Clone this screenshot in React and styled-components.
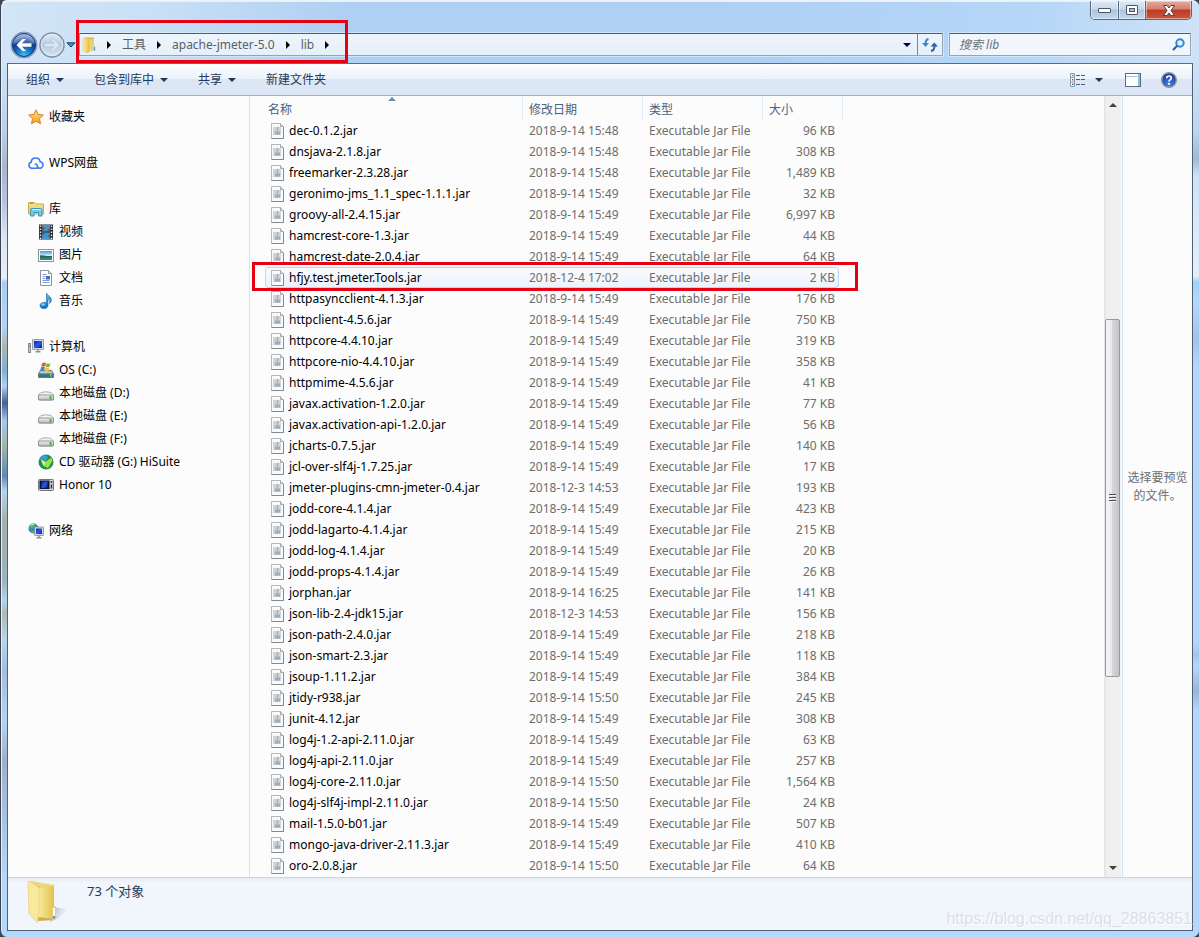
import React from "react";
import styled, { createGlobalStyle, css } from "styled-components";

const Global = createGlobalStyle`
  * { box-sizing: border-box; }
  body { margin: 0; background: #3d444e; }
  body, button, input {
    font-family: "Noto Sans", "Noto Sans CJK SC", sans-serif;
    font-size: 12px;
    line-height: 18px;
  }
  button { margin: 0; padding: 0; border: 0; background: none; color: inherit; cursor: default; }
  svg { display: block; flex: none; }
`;

const Window = styled.div`
  position: relative;
  display: flex;
  flex-direction: column;
  min-height: 100vh;
  padding: 0 7px 6px;
  border: 1px solid #39424e;
  border-top-color: #eef4fa;
  border-right: 0;
  border-bottom: 0;
  border-radius: 7px;
  box-shadow: inset 1px 1px 0 #e2f1fd;
  background:
    linear-gradient(100deg, #d3e5f7 0, #c9e0f6 150px, #afd0f2 340px, #aed0f3 60%, #b5d6f7 85%, #cfe3f7 100%) 0 0 / 100% 64px no-repeat,
    linear-gradient(#cfe4f8 60px, #bcd0e6 130px, #a9b7cc 165px, #b4c4dc 200px, #d9e4f3 235px, #e9eff8 277px, #a9ccf2 281px, #b2d3f5 325px, #a9b9ae 345px, #7fb0d4 370px, #b0d0f2 385px, #4a5c96 402px, #a9c8ea 420px, #a3b5a9 445px, #5f8ab4 475px, #b5d3f2 490px, #a3b1a8 520px, #9db4bd 580px, #b7d3ee 600px, #a9bcae 612px, #b9d4ee 640px, #a5bcdd 670px, #b7d3f2 720px, #9fb0cc 760px, #a9c3e2 820px, #b5d7fb 880px) 0 0 / 8px 100% no-repeat,
    linear-gradient(#cfe3f7 60px, #bcd6f0 130px, #9fb9d6 158px, #cfe3f7 175px, #e3f0fb 275px, #9fd2fb 281px, #b5d9fd 300px, #9fc4ea 340px, #b5d7fb 365px, #b5d7fb 640px, #a3c6ec 655px, #b5d7fb 665px, #98b6d8 690px, #b5d7fb 710px, #b5d7fb) 100% 0 / 7px 100% no-repeat,
    #b5d7fb;
`;

const CaptionButtons = styled.div`
  display: flex;
  align-self: flex-end;
  height: 19px;
  border: 1px solid #56697f;
  border-top: 0;
  border-radius: 0 0 5px 5px;
  overflow: hidden;
`;

const CaptionButton = styled.button`
  display: flex;
  align-items: center;
  justify-content: center;
  width: ${(p) => (p.$close ? 46 : 27)}px;
  border-left: ${(p) => (p.$first ? 0 : "1px solid #56697f")};
  box-shadow: inset 0 0 0 1px rgba(255, 255, 255, 0.45);
  background: ${(p) =>
    p.$close
      ? "linear-gradient(#e5aa9c 0, #d5806f 45%, #bd3a22 50%, #c9573c 100%)"
      : "linear-gradient(#dce9f7 0, #c8daee 45%, #adc4de 50%, #c3d8ef 100%)"};
`;

const NavBar = styled.div`
  display: flex;
  align-items: center;
  height: 43px;
  padding: 6px 1px 0 2px;
`;

const NavButtons = styled.div`
  display: flex;
  align-items: center;
  width: 69px;
`;

const NavButton = styled.button`
  display: flex;
`;

const fieldLook = css`
  height: 23px;
  border: 1px solid #93a4b8;
  border-top-color: #545c6a;
  border-radius: 1px;
  background: linear-gradient(#edf4fc, #e6f0fa);
  box-shadow: 0 0 0 1px rgba(225, 240, 253, 0.6);
`;

const AddressBar = styled.div`
  ${fieldLook}
  display: flex;
  flex: 1;
`;

const Crumbs = styled.nav`
  position: relative;
  display: flex;
  align-items: center;
  padding-left: 2px;
`;

const Crumb = styled.a`
  color: #5a6066;
  text-decoration: none;
`;

const CrumbArrow = styled.span`
  display: flex;
  justify-content: center;
  width: 26px;
`;

const AddressTools = styled.div`
  display: flex;
  margin-left: auto;
`;

const AddressButton = styled.button`
  display: flex;
  align-items: center;
  justify-content: center;
  width: ${(p) => (p.$divided ? 25 : 20)}px;
  border-left: ${(p) => (p.$divided ? "1px solid #76879a" : 0)};
`;

const SearchBox = styled.label`
  ${fieldLook}
  display: flex;
  align-items: center;
  width: 242px;
  margin-left: 6px;
  padding: 0 5px 0 9px;
  background: #f1f6fc;
`;

const SearchInput = styled.input`
  flex: 1;
  min-width: 0;
  padding: 0;
  border: 0;
  outline: 0;
  background: none;
  &::placeholder { color: #6b7077; font-style: italic; opacity: 1; }
`;

const Annotation = styled.span`
  position: absolute;
  inset: ${(p) => p.$inset};
  z-index: 2;
  border: 3px solid #e60012;
  pointer-events: none;
`;

const Client = styled.div`
  display: flex;
  flex: 1;
  flex-direction: column;
  border: 1px solid #4f6175;
  border-top-color: #5c6b7d;
  margin: 0 -1px 0 -1px;
  background: #fcfcfc;
`;

const Toolbar = styled.div`
  display: flex;
  align-items: center;
  height: 32px;
  padding: 0 15px 0 18px;
  border-bottom: 1px solid #9fb0c9;
  background: linear-gradient(#fefeff 0, #eaf3fb 48%, #dce6f4 50%, #dce7f5 100%);
  color: #1e395b;
`;

const ToolbarButton = styled.button`
  display: flex;
  align-items: center;
  gap: 6px;
  margin-right: 30px;
`;

const ViewTools = styled.div`
  display: flex;
  align-items: center;
  margin-left: auto;
`;

const IconButton = styled.button`
  display: flex;
  margin-left: ${(p) => p.$gap || 0}px;
`;

const Body = styled.div`
  display: flex;
  flex: 1;
`;

const Sidebar = styled.aside`
  display: flex;
  flex-direction: column;
  gap: 23px;
  width: 242px;
  padding: 9px 0 0 20px;
  border-right: 1px solid #d6e2f0;
`;

const TreeList = styled.ul`
  margin: 0;
  padding: 0;
  list-style: none;
`;

const TreeItem = styled.li`
  display: flex;
  align-items: center;
  gap: 5px;
  height: 23px;
  padding-left: ${(p) => (p.$child ? 10 : 0)}px;
  color: #000;
`;

const FilePane = styled.main`
  flex: 1;
  padding-left: 15px;
`;

const FileTable = styled.table`
  width: 578px;
  border-spacing: 0;
  table-layout: fixed;
`;

const HeadCell = styled.th`
  position: relative;
  width: ${(p) => p.$width}px;
  height: 24px;
  padding: 3px 0 0 ${(p) => (p.$name ? 3 : 6)}px;
  border-right: 1px solid #dfebf7;
  color: #4c607a;
  font-weight: 400;
  text-align: left;
`;

const SortMark = styled.span`
  position: absolute;
  top: 1px;
  left: 50%;
  margin-left: -6px;
`;

const FileRow = styled.tr`
  position: relative;
  height: 21px;
`;

const Cell = styled.td`
  height: 21px;
  padding: 0 ${(p) => (p.$right ? 8 : 0)}px 0 ${(p) => (p.$right ? 0 : 6)}px;
  color: #6d6d6d;
  text-align: ${(p) => (p.$right ? "right" : "left")};
  white-space: nowrap;
`;

const RowHighlight = styled.span`
  position: absolute;
  inset: 0 4px 0 0;
  border: 1px solid #b8d6fb;
  border-radius: 3px;
  background: linear-gradient(#fafbfd, #ebf3fd);
`;

const CellText = styled.span`
  position: relative;
`;

const FileName = styled.span`
  position: relative;
  display: flex;
  align-items: center;
  gap: 5px;
  color: #000;
`;

const ScrollTrack = styled.div`
  display: flex;
  flex-direction: column;
  width: 17px;
  margin-right: 1px;
  padding: 0 1px;
  background: linear-gradient(90deg, #e3e3e3, #f0f0f0 3px, #f0f0f0);
`;

const ScrollButton = styled.button`
  display: flex;
  align-items: center;
  justify-content: center;
  height: 18px;
`;

const ScrollSpace = styled.div`
  flex: ${(p) => p.$share};
`;

const ScrollThumb = styled.div`
  display: flex;
  flex: 356;
  align-items: center;
  justify-content: center;
  border: 1px solid #979797;
  border-radius: 2px;
  background: linear-gradient(90deg, #f6f6f6 0, #e9e9eb 45%, #d5d6d9 50%, #c3c4c8 100%);
`;

const Preview = styled.aside`
  display: flex;
  align-items: center;
  justify-content: center;
  width: 70px;
  border-left: 1px solid #d2e4f7;
  color: #6d6d6d;
  text-align: center;
`;

const StatusBar = styled.footer`
  display: flex;
  align-items: flex-start;
  height: 53px;
  padding: 2px 0 0 19px;
  border-top: 1px solid #c6d7e9;
  background: linear-gradient(#e4ecf6, #f1f5fc 4px);
  color: #1e395b;
`;

const StatusText = styled.span`
  margin: 2px 0 0 18px;
  font-size: 13px;
`;

const Watermark = styled.span`
  align-self: flex-end;
  margin: 0 0 2px auto;
  color: #dcdfe6;
  font-family: "Liberation Sans", sans-serif;
  font-size: 16px;
  text-shadow: 1px 1px 0 #fff;
`;

const Triangle = ({ dir = "down", size = 8, color = "#1e395b" }) => {
  const h = size / 2;
  const shapes = {
    down: [size, h, `0,0 ${size},0 ${h},${h}`],
    up: [size, h, `0,${h} ${size},${h} ${h},0`],
    right: [h, size, `0,0 ${h},${h} 0,${size}`],
  };
  const [w, ht, points] = shapes[dir];
  return (
    <svg width={w} height={ht} aria-hidden="true">
      <polygon points={points} fill={color} />
    </svg>
  );
};

const Svg = ({ w = 16, h = 16, vb, children }) => (
  <svg width={w} height={h} viewBox={vb || `0 0 ${w} ${h}`} aria-hidden="true">
    {children}
  </svg>
);

const HiddenSvg = styled.svg`
  position: absolute;
`;

const Defs = () => (
  <HiddenSvg width="0" height="0" aria-hidden="true">
    <defs>
      <linearGradient id="gold" x1="0" y1="0" x2="1" y2="0">
        <stop offset="0" stopColor="#fbeda6" />
        <stop offset="1" stopColor="#e3c14f" />
      </linearGradient>
      <linearGradient id="star" x1="0" y1="0" x2="0" y2="1">
        <stop offset="0" stopColor="#ffe27a" />
        <stop offset="1" stopColor="#fb9d1c" />
      </linearGradient>
      <linearGradient id="screen" x1="0" y1="0" x2="1" y2="1">
        <stop offset="0" stopColor="#0a1fa6" />
        <stop offset="0.5" stopColor="#2b59e8" />
        <stop offset="1" stopColor="#0b1c8c" />
      </linearGradient>
      <linearGradient id="drive" x1="0" y1="0" x2="0" y2="1">
        <stop offset="0" stopColor="#f2f2f2" />
        <stop offset="1" stopColor="#b4b6ba" />
      </linearGradient>
      <radialGradient id="back" cx="0.5" cy="0.95" r="0.9">
        <stop offset="0" stopColor="#35c5f4" />
        <stop offset="0.45" stopColor="#1560b8" />
        <stop offset="0.7" stopColor="#103a8c" />
        <stop offset="1" stopColor="#8fb0dd" />
      </radialGradient>
      <linearGradient id="forward" x1="0" y1="0" x2="0" y2="1">
        <stop offset="0" stopColor="#e3eaf2" />
        <stop offset="0.5" stopColor="#b9cade" />
        <stop offset="1" stopColor="#d9e7f4" />
      </linearGradient>
      <radialGradient id="help" cx="0.5" cy="0.8" r="0.8">
        <stop offset="0" stopColor="#4b86ea" />
        <stop offset="1" stopColor="#142c93" />
      </radialGradient>
      <linearGradient id="music" x1="0" y1="0" x2="0" y2="1">
        <stop offset="0" stopColor="#63b9ea" />
        <stop offset="1" stopColor="#0f6fc0" />
      </linearGradient>
      <linearGradient id="sky" x1="0" y1="0" x2="0" y2="1">
        <stop offset="0" stopColor="#3d9bdc" />
        <stop offset="0.5" stopColor="#d5ecf5" />
        <stop offset="0.55" stopColor="#2f8a5b" />
        <stop offset="1" stopColor="#2a86a8" />
      </linearGradient>
      <linearGradient id="shade" x1="0" y1="0" x2="1" y2="0.4">
        <stop offset="0" stopColor="#6d7585" stopOpacity="0.6" />
        <stop offset="1" stopColor="#9aa3b3" stopOpacity="0" />
      </linearGradient>
    </defs>
  </HiddenSvg>
);

const BackIcon = () => (
  <Svg w={28} h={28}>
    <circle cx="14" cy="14" r="13" fill="#9fb7d2" stroke="#7d93ae" />
    <circle cx="14" cy="14" r="11.5" fill="url(#back)" stroke="#123a7d" />
    <path d="M3.5 13a10.5 9.5 0 0 1 21 0c-6-2-15-2-21 0z" fill="#fff" opacity="0.25" />
    <path d="M6.5 14l6-6h3.5l-4 4.300h9.500v3.400h-9.500l4 4.300h-3.500z" fill="#fff" />
  </Svg>
);

const ForwardIcon = () => (
  <Svg w={28} h={28}>
    <circle cx="14" cy="14" r="12" fill="url(#forward)" stroke="#7f90a6" strokeWidth="1.5" />
    <circle cx="14" cy="14" r="10.7" fill="none" stroke="#e8f0f8" opacity="0.8" />
    <path d="M21.5 14l-6-6h-3.500l4 4.300h-9.500v3.400h9.500l-4 4.300h3.500z" fill="#dde7f2" stroke="#b5c4d6" strokeWidth="0.7" />
  </Svg>
);

const FolderIcon = () => (
  <Svg w={14} h={16}>
    <path d="M5 .5h7v12l-7 3z" fill="#dcb944" />
    <path d="M1 1l4.500-.5 1.500 2v12.500l-2 .8-4-2z" fill="url(#gold)" stroke="#d9bb5a" strokeWidth="0.5" />
    <path d="M7 2h5v11l-5 2z" fill="#ecd070" />
    <path d="M11 9h2.500v5H11z" fill="#b9dff0" />
    <path d="M12.300 10v3.500" stroke="#2c8fdd" />
  </Svg>
);

const BigFolderIcon = () => (
  <Svg w={42} h={46}>
    <path d="M26 27l14 2-8 9-9 4z" fill="url(#shade)" />
    <path d="M3 1l24 4v35l-16 1z" fill="#cfae45" />
    <path d="M10 8l17-3v34l-17-2z" fill="url(#gold)" />
    <path d="M1 2q0-1.500 2-.8l8 5.300q1 1 1 2v20l-1.500 14.500L2 33.500z" fill="#f9e99b" stroke="#e6cf79" strokeWidth="0.7" />
    <path d="M3 1l23 3v2l-13 1z" fill="#f7ea9f" opacity="0.7" />
    <path d="M25 27q3-2 4 0v12l-4 1z" fill="#e6cf74" />
    <path d="M27 28v8.500" stroke="#fff" strokeWidth="1.800" />
    <circle cx="27" cy="37.300" r="1.200" fill="#3b93ea" />
  </Svg>
);

const StarIcon = () => (
  <Svg>
    <path d="M8 .8l2.200 4.700 5.100.6-3.800 3.500 1 5.200L8 12.200 3.500 14.800l1-5.200L.7 6.100l5.100-.6z" fill="url(#star)" stroke="#dd7a26" />
  </Svg>
);

const CloudIcon = () => (
  <Svg>
    <path d="M9.500 13.200H4a3 3 0 0 1-.8-5.900C3.300 4.700 5.300 3 7.700 3c2.300 0 4.100 1.600 4.400 3.700 1.800.3 2.900 1.600 2.900 3.200a3.200 3.200 0 0 1-3.200 3.300c-1.700 0-2.600-1.200-2.600-2.400 0-1-.7-1.800-1.900-1.800" fill="none" stroke="#3c7bf0" strokeWidth="1.600" strokeLinecap="round" />
  </Svg>
);

const LibraryIcon = () => (
  <Svg>
    <path d="M.5 1.500h6l1 1.500h8v10H.5z" fill="#f5df8b" stroke="#c9a94a" />
    <path d="M2 2h3v1H2z" fill="#5cb73a" />
    <path d="M1 4.500h14v8H1z" fill="#efd87f" />
    <path d="M2.500 15V9q0-1.500 1.500-1.500h8.500q1.500 0 1.500 1.500v6h-3.500v-3.500H6V15z" fill="#78c6e8" stroke="#3794c4" />
    <path d="M4 8.500h9" stroke="#d7f2fb" />
  </Svg>
);

const VideoIcon = () => (
  <Svg>
    <rect x="1" y="0.500" width="14" height="15" fill="#24282c" />
    <path d="M2.500 1.500v14M13.500 1.500v14" stroke="#e7e7e7" strokeWidth="1.500" strokeDasharray="1.500 1.500" />
    <rect x="4" y="1" width="8" height="6.500" fill="#3f93cf" />
    <rect x="4" y="8.500" width="8" height="6.500" fill="#3f93cf" />
    <path d="M4 2l3 3-3 2zM12 4l-3 3h3zM4 12l3-3H4zM12 10l-2 2 2 2z" fill="#8a4a36" />
  </Svg>
);

const PictureIcon = () => (
  <Svg>
    <rect x="0.500" y="2.500" width="15" height="12" fill="#fff" stroke="#8a949e" />
    <rect x="2" y="4" width="12" height="9" fill="url(#sky)" />
    <path d="M2 8.500c4-1 6 1.500 12 .5v1.500H2z" fill="#24684a" />
  </Svg>
);

const DocumentIcon = () => (
  <Svg>
    <path d="M2.500.5h8l3 3v12h-11z" fill="#fff" stroke="#8d959e" />
    <path d="M10.500.5v3h3" fill="#dde3ea" stroke="#8d959e" />
    <path d="M4.500 4.500h4M4.500 6.500h3M4.500 8.500h3M4.500 10.500h7M4.500 12.500h7" stroke="#9097d0" />
    <rect x="8" y="6" width="4" height="3.500" fill="#3676c4" />
  </Svg>
);

const MusicIcon = () => (
  <Svg>
    <path d="M8.500 0c.8 2.700 5.500 3.300 4.800 7.500-.3 1.500-1 2.500-1.800 3 .6-2.500.2-4.200-1.500-4.500v6.500a4 3.200 0 1 1-1.500-2.500z" fill="url(#music)" stroke="#1d6cae" strokeWidth="0.6" />
    <ellipse cx="5" cy="11.500" rx="2" ry="1.200" fill="#7fd0f7" />
  </Svg>
);

const Monitor = ({ x, y, w, h }) => (
  <g>
    <rect x={x} y={y} width={w} height={h} rx="0.5" fill="#d5d8dd" stroke="#858b95" strokeWidth="0.8" />
    <rect x={x + 1.5} y={y + 1.5} width={w - 3} height={h - 3} fill="url(#screen)" />
    <path d={`M${x + w / 2} ${y + h}v2.5M${x + w / 2 - 2.5} ${y + h + 2.3}h5`} stroke="#8a9099" strokeWidth="1.5" />
  </g>
);

const ComputerIcon = () => (
  <Svg>
    <rect x="0.500" y="4.500" width="2" height="9" fill="#c5c9ce" stroke="#888e96" />
    <rect x="1" y="6" width="1" height="2" fill="#5ab83c" />
    <Monitor x={4.5} y={0.5} w={11} h={10} />
  </Svg>
);

const SystemDriveIcon = () => (
  <Svg>
    <path d="M2.500 8.500h11l2 3v4H.5v-4z" fill="#bfc3c8" stroke="#70767e" />
    <rect x="1" y="11.500" width="14" height="3.500" fill="#3c7389" />
    <rect x="12" y="12" width="1.500" height="2.500" fill="#72e044" />
    <path d="M4 1.500q2-1.500 4-.5l-.8 3.500q-2-1-4 .3z" fill="#ea5c25" />
    <path d="M8.500 1.300q2 1 4 0l-1 3.500q-2 .8-3.800-.2z" fill="#7cbb2f" />
    <path d="M3 5.300q2-1.200 4-.3L6.200 8.600q-2-1-4 .2z" fill="#3a8be0" />
    <path d="M7.500 5.200q2 1 3.900.2l-1 3.500q-2 .8-3.800-.2z" fill="#f9c322" />
  </Svg>
);

const DriveIcon = () => (
  <Svg>
    <path d="M3 7.500q5-1.500 10 0l2.500 2.500v4.500q0 .5-.5.500H1q-.5 0-.5-.5V10z" fill="#f3f3f3" stroke="#a9acb1" />
    <rect x="0.500" y="10" width="15" height="5" rx="1.500" fill="url(#drive)" stroke="#7d8086" strokeWidth="0.8" />
    <rect x="11.500" y="11" width="2" height="3" fill="#42b52c" />
  </Svg>
);

const HiSuiteIcon = () => (
  <Svg>
    <circle cx="8" cy="8" r="7.500" fill="#1c8f5c" />
    <path d="M1 6.500a7.500 7.500 0 0 1 6-5.500l3 2-2 4-4-2z" fill="#2fa7c9" />
    <path d="M3 5.500l4.500 2.500 6-4.500.8 3.500-4.300 7-4.500-2z" fill="#a4e03a" />
    <path d="M3 5.500l4.500 2.500-2 4z" fill="#d9f3b0" />
  </Svg>
);

const PhoneIcon = () => (
  <Svg>
    <rect x="0.500" y="2.500" width="15" height="11" rx="1" fill="#cfd2d6" stroke="#6f757d" />
    <rect x="1.500" y="3.500" width="10" height="8.500" fill="#0d1638" />
    <rect x="3.500" y="4.500" width="6" height="6.500" fill="url(#screen)" />
    <path d="M13.500 4v2M13.500 7.500v4" stroke="#30353c" strokeWidth="1.500" />
  </Svg>
);

const NetworkIcon = () => (
  <Svg>
    <circle cx="5.500" cy="5.500" r="5" fill="#2c86d8" />
    <path d="M2 2.500q3-3 5-1.500l-1 3-3 2-2-.5zM3 7l3 1v2.300l-2.500-.8z" fill="#56b743" />
    <path d="M3 2.500q2-1.500 3-1" stroke="#d8f0ff" fill="none" />
    <Monitor x={6.5} y={4} w={9} h={8.5} />
  </Svg>
);

const JarIcon = () => (
  <Svg w={13} h={16}>
    <path d="M.5.5h9l3 3v12H.5z" fill="#fafafa" stroke="#b4b8bc" />
    <path d="M.5 15.500h12V4" fill="none" stroke="#85898e" />
    <path d="M9.500.5v3h3" fill="#dfe2e5" stroke="#a5a9ad" />
    <rect x="2" y="4" width="8" height="8" fill="#ccd5dd" />
    <path d="M6.500 4c1.300 1.600-1.300 2.200 0 4.200" stroke="#e39a55" fill="none" strokeWidth="1.200" />
    <path d="M4 8.500h5v3H4z" fill="#8aa5bd" />
    <path d="M4 10h5" stroke="#b9c9d8" strokeWidth="0.6" />
  </Svg>
);

const RefreshIcon = () => (
  <Svg w={16} h={14}>
    <path d="M6.500 1q-3 .5-3 5" fill="none" stroke="#3a86d3" strokeWidth="2" />
    <path d="M0 5h7L3.500 9z" fill="#3a86d3" />
    <path d="M9 13q3.500-.5 3.500-5" fill="none" stroke="#2a63b2" strokeWidth="2" />
    <path d="M8.500 8.500H16L12.300 4.500z" fill="#2a63b2" />
  </Svg>
);

const SearchIcon = () => (
  <Svg w={13} h={13}>
    <circle cx="8" cy="5" r="3.700" fill="#e3f1fb" stroke="#3587d2" strokeWidth="2" />
    <path d="M5.200 7.800L1 12" stroke="#2a5fb0" strokeWidth="2.200" />
  </Svg>
);

const ViewIcon = () => (
  <Svg w={16} h={14}>
    <path d="M.5.5h4v13h-4zM.5 4.500h4M.5 9h4" fill="#fff" stroke="#8797ae" />
    <path d="M2 2.500h1.500" stroke="#4a9b4a" strokeWidth="1.500" />
    <path d="M2 6.800h1.500" stroke="#d33" strokeWidth="1.500" />
    <path d="M2 11.300h1.500" stroke="#36c" strokeWidth="1.500" />
    <path d="M6 2.500h4M11 2.500h4M6 6.500h4M11 6.500h4M6 11.500h4M11 11.500h4" stroke="#4c5f7a" />
  </Svg>
);

const PreviewIcon = () => (
  <Svg w={16} h={14}>
    <rect x="0.500" y="0.500" width="15" height="13" fill="#fff" stroke="#5a6c84" />
    <path d="M1 3.500h12" stroke="#b3c1d3" />
    <rect x="13" y="1" width="2" height="12" fill="#8cc3d8" />
  </Svg>
);

const HelpIcon = () => (
  <Svg>
    <circle cx="8" cy="8" r="7.300" fill="url(#help)" stroke="#8f96a3" strokeWidth="1.400" />
    <path d="M5.700 6.300q0-2.300 2.300-2.300t2.300 2q0 1-1.200 1.700T8 9.500" fill="none" stroke="#fff" strokeWidth="1.700" />
    <circle cx="8" cy="11.800" r="1.100" fill="#fff" />
  </Svg>
);

const groups = [
  [["收藏夹", StarIcon]],
  [["WPS网盘", CloudIcon]],
  [["库", LibraryIcon], ["视频", VideoIcon], ["图片", PictureIcon], ["文档", DocumentIcon], ["音乐", MusicIcon]],
  [
    ["计算机", ComputerIcon],
    ["OS (C:)", SystemDriveIcon],
    ["本地磁盘 (D:)", DriveIcon],
    ["本地磁盘 (E:)", DriveIcon],
    ["本地磁盘 (F:)", DriveIcon],
    ["CD 驱动器 (G:) HiSuite", HiSuiteIcon],
    ["Honor 10", PhoneIcon],
  ],
  [["网络", NetworkIcon]],
];

const files = [
  ["dec-0.1.2.jar", "2018-9-14 15:48", "96 KB"],
  ["dnsjava-2.1.8.jar", "2018-9-14 15:48", "308 KB"],
  ["freemarker-2.3.28.jar", "2018-9-14 15:48", "1,489 KB"],
  ["geronimo-jms_1.1_spec-1.1.1.jar", "2018-9-14 15:49", "32 KB"],
  ["groovy-all-2.4.15.jar", "2018-9-14 15:49", "6,997 KB"],
  ["hamcrest-core-1.3.jar", "2018-9-14 15:49", "44 KB"],
  ["hamcrest-date-2.0.4.jar", "2018-9-14 15:49", "64 KB"],
  ["hfjy.test.jmeter.Tools.jar", "2018-12-4 17:02", "2 KB", true],
  ["httpasyncclient-4.1.3.jar", "2018-9-14 15:49", "176 KB"],
  ["httpclient-4.5.6.jar", "2018-9-14 15:49", "750 KB"],
  ["httpcore-4.4.10.jar", "2018-9-14 15:49", "319 KB"],
  ["httpcore-nio-4.4.10.jar", "2018-9-14 15:49", "358 KB"],
  ["httpmime-4.5.6.jar", "2018-9-14 15:49", "41 KB"],
  ["javax.activation-1.2.0.jar", "2018-9-14 15:49", "77 KB"],
  ["javax.activation-api-1.2.0.jar", "2018-9-14 15:49", "56 KB"],
  ["jcharts-0.7.5.jar", "2018-9-14 15:49", "140 KB"],
  ["jcl-over-slf4j-1.7.25.jar", "2018-9-14 15:49", "17 KB"],
  ["jmeter-plugins-cmn-jmeter-0.4.jar", "2018-12-3 14:53", "193 KB"],
  ["jodd-core-4.1.4.jar", "2018-9-14 15:49", "423 KB"],
  ["jodd-lagarto-4.1.4.jar", "2018-9-14 15:49", "215 KB"],
  ["jodd-log-4.1.4.jar", "2018-9-14 15:49", "20 KB"],
  ["jodd-props-4.1.4.jar", "2018-9-14 15:49", "26 KB"],
  ["jorphan.jar", "2018-9-14 16:25", "141 KB"],
  ["json-lib-2.4-jdk15.jar", "2018-12-3 14:53", "156 KB"],
  ["json-path-2.4.0.jar", "2018-9-14 15:49", "218 KB"],
  ["json-smart-2.3.jar", "2018-9-14 15:49", "118 KB"],
  ["jsoup-1.11.2.jar", "2018-9-14 15:49", "384 KB"],
  ["jtidy-r938.jar", "2018-9-14 15:50", "245 KB"],
  ["junit-4.12.jar", "2018-9-14 15:49", "308 KB"],
  ["log4j-1.2-api-2.11.0.jar", "2018-9-14 15:49", "63 KB"],
  ["log4j-api-2.11.0.jar", "2018-9-14 15:49", "257 KB"],
  ["log4j-core-2.11.0.jar", "2018-9-14 15:50", "1,564 KB"],
  ["log4j-slf4j-impl-2.11.0.jar", "2018-9-14 15:50", "24 KB"],
  ["mail-1.5.0-b01.jar", "2018-9-14 15:49", "507 KB"],
  ["mongo-java-driver-2.11.3.jar", "2018-9-14 15:49", "410 KB"],
  ["oro-2.0.8.jar", "2018-9-14 15:50", "64 KB"],
];

const crumbs = ["工具", "apache-jmeter-5.0", "lib"];

export default function App() {
  return (
    <>
      <Global />
      <Defs />
      <Window>
        <CaptionButtons>
          <CaptionButton $first aria-label="最小化">
            <Svg w={13} h={7}>
              <rect x="0.500" y="1.500" width="12" height="4" rx="0.5" fill="#fff" stroke="#4e5561" />
            </Svg>
          </CaptionButton>
          <CaptionButton aria-label="最大化">
            <Svg w={12} h={10}>
              <rect x="0.500" y="0.500" width="11" height="9" rx="0.5" fill="#fff" stroke="#4e5561" />
              <rect x="3.500" y="3.500" width="5" height="3" fill="#a9c0dc" stroke="#4e5561" />
            </Svg>
          </CaptionButton>
          <CaptionButton $close aria-label="关闭">
            <Svg w={12} h={11}>
              <path d="M.5.5H4L6 3l2-2.500h3.500L8 5.500l3.500 5H8L6 8l-2 2.500H.5l3.500-5z" fill="#fff" stroke="#50434a" />
            </Svg>
          </CaptionButton>
        </CaptionButtons>

        <NavBar>
          <NavButtons>
            <NavButton aria-label="后退"><BackIcon /></NavButton>
            <NavButton aria-label="前进"><ForwardIcon /></NavButton>
            <NavButton aria-label="最近的位置">
              <Svg w={10} h={6}>
                <path d="M1 .8h8L5 5z" fill="#2a9fd0" stroke="#123f70" />
              </Svg>
            </NavButton>
          </NavButtons>
          <AddressBar>
            <Crumbs>
              <FolderIcon />
              {crumbs.map((name) => (
                <React.Fragment key={name}>
                  <CrumbArrow><Triangle dir="right" color="#000" /></CrumbArrow>
                  <Crumb href="#">{name}</Crumb>
                </React.Fragment>
              ))}
              <CrumbArrow><Triangle dir="right" color="#000" /></CrumbArrow>
              <Annotation $inset="-14px -8px -8px -4px" />
            </Crumbs>
            <AddressTools>
              <AddressButton aria-label="以前的位置"><Triangle color="#00003c" /></AddressButton>
              <AddressButton $divided aria-label="刷新"><RefreshIcon /></AddressButton>
            </AddressTools>
          </AddressBar>
          <SearchBox>
            <SearchInput placeholder="搜索 lib" aria-label="搜索 lib" />
            <SearchIcon />
          </SearchBox>
        </NavBar>

        <Client>
          <Toolbar>
            <ToolbarButton>组织<Triangle /></ToolbarButton>
            <ToolbarButton>包含到库中<Triangle /></ToolbarButton>
            <ToolbarButton>共享<Triangle /></ToolbarButton>
            <ToolbarButton>新建文件夹</ToolbarButton>
            <ViewTools>
              <IconButton aria-label="更改您的视图"><ViewIcon /></IconButton>
              <IconButton $gap={9} aria-label="更多选项"><Triangle /></IconButton>
              <IconButton $gap={22} aria-label="显示预览窗格"><PreviewIcon /></IconButton>
              <IconButton $gap={20} aria-label="获取帮助"><HelpIcon /></IconButton>
            </ViewTools>
          </Toolbar>

          <Body>
            <Sidebar>
              {groups.map((items) => (
                <TreeList key={items[0][0]}>
                  {items.map(([label, Icon], i) => (
                    <TreeItem key={label} $child={i > 0}>
                      <Icon />
                      {label}
                    </TreeItem>
                  ))}
                </TreeList>
              ))}
            </Sidebar>

            <FilePane>
              <FileTable>
                <thead>
                  <tr>
                    <HeadCell $name $width={258}>
                      名称
                      <SortMark><Triangle dir="up" color="#5b8fb5" /></SortMark>
                    </HeadCell>
                    <HeadCell $width={120}>修改日期</HeadCell>
                    <HeadCell $width={120}>类型</HeadCell>
                    <HeadCell $width={80}>大小</HeadCell>
                  </tr>
                </thead>
                <tbody>
                  {files.map(([name, date, size, hot]) => (
                    <FileRow key={name}>
                      <Cell>
                        {hot && <RowHighlight />}
                        <FileName><JarIcon />{name}</FileName>
                        {hot && <Annotation $inset="-5px -15px -3px -13px" />}
                      </Cell>
                      <Cell><CellText>{date}</CellText></Cell>
                      <Cell><CellText>Executable Jar File</CellText></Cell>
                      <Cell $right><CellText>{size}</CellText></Cell>
                    </FileRow>
                  ))}
                </tbody>
              </FileTable>
            </FilePane>

            <ScrollTrack>
              <ScrollButton aria-label="向上滚动"><Triangle dir="up" color="#404040" /></ScrollButton>
              <ScrollSpace $share={206} />
              <ScrollThumb>
                <Svg w={7} h={8}>
                  <path d="M0 .5h7M0 3.500h7M0 6.500h7" stroke="#4a4a4a" />
                  <path d="M0 1.500h7M0 4.500h7M0 7.500h7" stroke="#f4f4f4" />
                </Svg>
              </ScrollThumb>
              <ScrollSpace $share={183} />
              <ScrollButton aria-label="向下滚动"><Triangle color="#404040" /></ScrollButton>
            </ScrollTrack>
            <Preview>选择要预览的文件。</Preview>
          </Body>

          <StatusBar>
            <BigFolderIcon />
            <StatusText>73 个对象</StatusText>
            <Watermark>https://blog.csdn.net/qq_28863851</Watermark>
          </StatusBar>
        </Client>
      </Window>
    </>
  );
}
